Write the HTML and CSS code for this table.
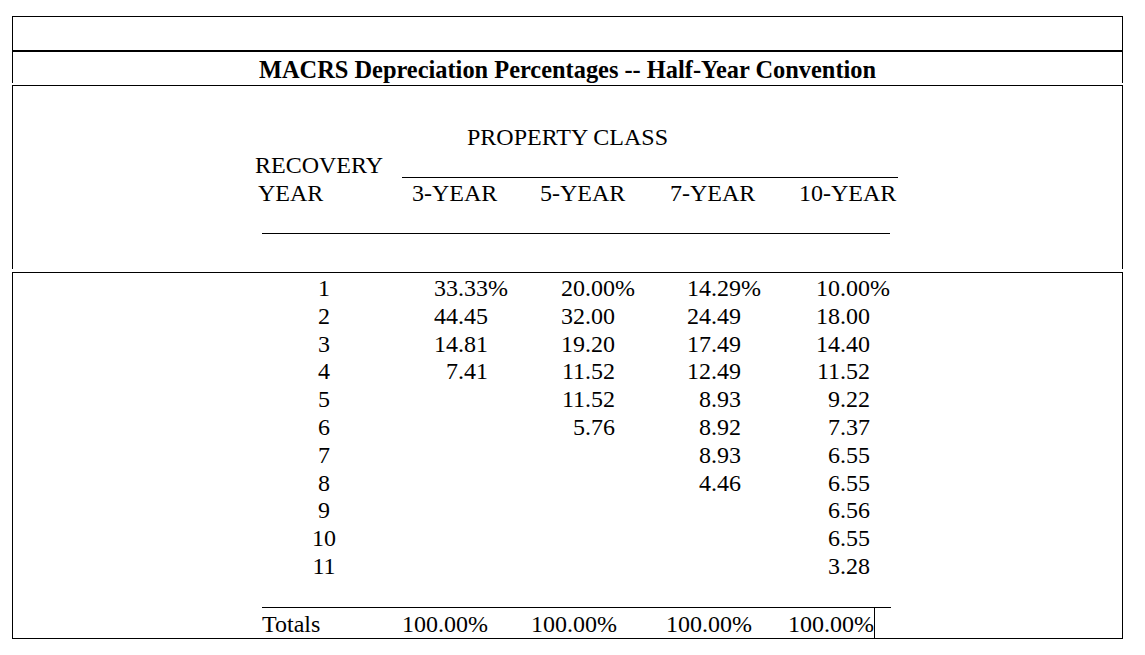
FILE: index.html
```html
<!DOCTYPE html>
<html lang="en">
<head>
<meta charset="utf-8">
<title>MACRS Depreciation Percentages</title>
<link rel="stylesheet" href="styles.css">
</head>
<body>
<div class="page">
  <div class="sheet">
    <div class="top-box"></div>
    <div class="title-row">
      <h1 class="title">MACRS Depreciation Percentages -- Half-Year Convention</h1>
    </div>
    <div class="head-box">
      <div class="class-label">PROPERTY CLASS</div>
      <div class="head-grid">
        <div class="rec">RECOVERY</div>
        <div class="class-rule"></div>
        <div class="rec yr">YEAR</div>
        <div class="ch">3-YEAR</div>
        <div class="ch">5-YEAR</div>
        <div class="ch">7-YEAR</div>
        <div class="ch">10-YEAR</div>
      </div>
      <div class="head-rule"></div>
    </div>
    <div class="body-box">
      <div class="rows">
        <div class="yr-n">1</div><div class="v"><span class="n">33.33</span>%</div><div class="v"><span class="n">20.00</span>%</div><div class="v"><span class="n">14.29</span>%</div><div class="v"><span class="n">10.00</span>%</div>
        <div class="yr-n">2</div><div class="v"><span class="n">44.45</span></div><div class="v"><span class="n">32.00</span></div><div class="v"><span class="n">24.49</span></div><div class="v"><span class="n">18.00</span></div>
        <div class="yr-n">3</div><div class="v"><span class="n">14.81</span></div><div class="v"><span class="n">19.20</span></div><div class="v"><span class="n">17.49</span></div><div class="v"><span class="n">14.40</span></div>
        <div class="yr-n">4</div><div class="v"><span class="n">7.41</span></div><div class="v"><span class="n">11.52</span></div><div class="v"><span class="n">12.49</span></div><div class="v"><span class="n">11.52</span></div>
        <div class="yr-n">5</div><div class="v"></div><div class="v"><span class="n">11.52</span></div><div class="v"><span class="n">8.93</span></div><div class="v"><span class="n">9.22</span></div>
        <div class="yr-n">6</div><div class="v"></div><div class="v"><span class="n">5.76</span></div><div class="v"><span class="n">8.92</span></div><div class="v"><span class="n">7.37</span></div>
        <div class="yr-n">7</div><div class="v"></div><div class="v"></div><div class="v"><span class="n">8.93</span></div><div class="v"><span class="n">6.55</span></div>
        <div class="yr-n">8</div><div class="v"></div><div class="v"></div><div class="v"><span class="n">4.46</span></div><div class="v"><span class="n">6.55</span></div>
        <div class="yr-n">9</div><div class="v"></div><div class="v"></div><div class="v"></div><div class="v"><span class="n">6.56</span></div>
        <div class="yr-n">10</div><div class="v"></div><div class="v"></div><div class="v"></div><div class="v"><span class="n">6.55</span></div>
        <div class="yr-n">11</div><div class="v"></div><div class="v"></div><div class="v"></div><div class="v"><span class="n">3.28</span></div>
      </div>
      <div class="totals">
        <div class="t-label">Totals</div>
        <div class="t">100.00%</div>
        <div class="t">100.00%</div>
        <div class="t">100.00%</div>
        <div class="t t-last">100.00%</div>
        <div class="t-fill"></div>
      </div>
    </div>
  </div>
</div>
</body>
</html>
```
FILE: styles.css
```css
html, body {
  margin: 0;
  padding: 0;
  background: #fff;
}

body {
  font-family: "Liberation Serif", "Times New Roman", serif;
  font-size: 24px;
  color: #000;
}

.page {
  padding: 16px 0 0 12px;
}

.sheet {
  width: 1111px;
}

.top-box {
  box-sizing: border-box;
  height: 36px;
  border: 1px solid #000;
  border-bottom-width: 2px;
}

.title-row {
  border-left: 1px solid #000;
  border-right: 1px solid #000;
  padding-top: 4px;
}

.title {
  margin: 0;
  font-size: 24.4px;
  font-weight: bold;
  line-height: 27px;
  text-align: center;
}

.head-box {
  margin-top: 2px;
  border: 1px solid #000;
  border-bottom: none;
  padding: 37px 0 35px 0;
}

.class-label {
  line-height: 28px;
  text-align: center;
}

.head-grid {
  margin-left: 242px;
  display: grid;
  grid-template-columns: 147px 128px 130px 129px 109px;
  line-height: 28px;
}

.rec {
  white-space: nowrap;
}

.yr {
  padding-left: 3px;
}

.class-rule {
  grid-column: 2 / 6;
  align-self: start;
  height: 26px;
  border-bottom: 1px solid #000;
}

.ch {
  padding-left: 10px;
  white-space: nowrap;
}

.head-rule {
  margin: 26px 0 0 249px;
  width: 628px;
  border-top: 1px solid #000;
}

.body-box {
  margin-top: 3px;
  border: 1px solid #000;
  padding-top: 2px;
}

.rows {
  margin-left: 248px;
  display: grid;
  grid-template-columns: 126px 127px 126px 129px 127px;
  grid-auto-rows: 27.8px;
  line-height: 27.8px;
}

.yr-n {
  text-align: center;
}

.v {
  white-space: nowrap;
}

.n {
  display: inline-block;
  width: 101px;
  text-align: right;
}

.totals {
  margin: 26px 0 0 249px;
  width: 629px;
  border-top: 1px solid #000;
  display: grid;
  grid-template-columns: 126px 100px 129px 135px 123px 16px;
}

.totals > div {
  box-sizing: border-box;
  padding-top: 2px;
  line-height: 28px;
  white-space: nowrap;
}

.t {
  text-align: right;
}

.t-last {
  border-right: 1px solid #000;
}
```
